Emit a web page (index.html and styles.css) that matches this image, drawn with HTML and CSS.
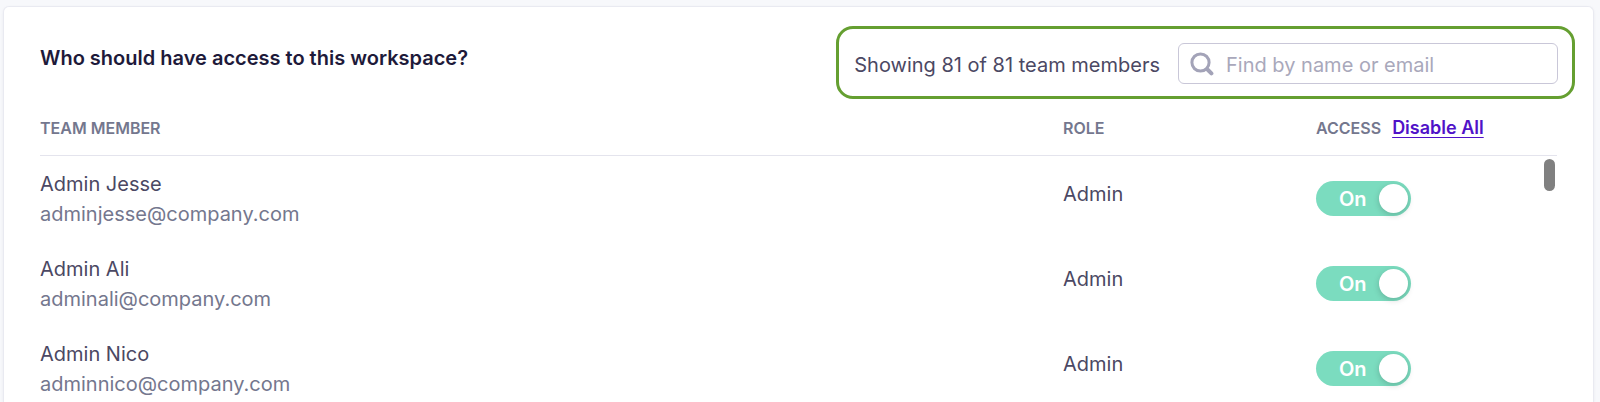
FILE: index.html
```html
<!DOCTYPE html>
<html lang="en">
<head>
<meta charset="utf-8">
<meta name="viewport" content="width=device-width, initial-scale=1">
<title>Workspace access</title>
<link rel="stylesheet" href="styles.css">
</head>
<body>
<main class="card">
  <header class="card-header">
    <h1 class="title">Who should have access to this workspace?</h1>
    <form class="filter" role="search">
      <label class="count" for="member-search">Showing 81 of 81 team members</label>
      <div class="search">
        <svg class="search-icon" viewBox="0 0 24 24" aria-hidden="true">
          <circle cx="10.5" cy="10.5" r="8.6"/>
          <path d="M16.8 16.8 L17.6 17.6"/>
          <path class="search-handle" d="M18 18 L21.4 21.4"/>
        </svg>
        <input class="search-input" id="member-search" type="search" placeholder="Find by name or email">
      </div>
    </form>
  </header>
  <section class="members">
    <div class="members-scroll">
      <table class="table">
        <thead>
          <tr>
            <th class="col-member" scope="col">TEAM MEMBER</th>
            <th class="col-role" scope="col">ROLE</th>
            <th class="col-access" scope="col">ACCESS <a class="disable-all" href="#">Disable All</a></th>
          </tr>
        </thead>
        <tbody>
          <tr>
            <td><div class="name">Admin Jesse</div><div class="email">adminjesse@company.com</div></td>
            <td class="role">Admin</td>
            <td class="access"><label class="toggle"><input class="toggle-input" type="checkbox" checked><span class="toggle-text">On</span></label></td>
          </tr>
          <tr>
            <td><div class="name">Admin Ali</div><div class="email">adminali@company.com</div></td>
            <td class="role">Admin</td>
            <td class="access"><label class="toggle"><input class="toggle-input" type="checkbox" checked><span class="toggle-text">On</span></label></td>
          </tr>
          <tr>
            <td><div class="name">Admin Nico</div><div class="email">adminnico@company.com</div></td>
            <td class="role">Admin</td>
            <td class="access"><label class="toggle"><input class="toggle-input" type="checkbox" checked><span class="toggle-text">On</span></label></td>
          </tr>
        </tbody>
      </table>
    </div>
    <span class="scroll-thumb" aria-hidden="true"></span>
  </section>
</main>
</body>
</html>
```
FILE: styles.css
```css
* {
  box-sizing: border-box;
}

body {
  margin: 0;
  padding: 6px 6px 0 3px;
  height: 100vh;
  display: flex;
  overflow: hidden;
  background: #f7f8fb;
  color: #4b4863;
  font: 400 20px/30px Inter, "Liberation Sans", sans-serif;
}

.card {
  flex: 1;
  min-width: 0;
  display: flex;
  flex-direction: column;
  padding: 19px 18px 0 36px;
  background: #fff;
  border: 1px solid #e9eaf1;
  border-bottom: 0;
  border-radius: 6px 6px 0 0;
  box-shadow: 0 1px 3px rgba(40, 40, 90, 0.06);
}

.card-header {
  display: flex;
  justify-content: space-between;
  align-items: flex-start;
}

.title {
  margin: 17px 0 0;
  color: #1e1a3a;
  font-size: 20px;
  line-height: 30px;
  font-weight: 600;
}

.filter {
  display: flex;
  align-items: center;
  gap: 18px;
  padding: 14px 14px 12px 15px;
  border: 3px solid #659f31;
  border-radius: 17px;
}

.count {
  padding-top: 2px;
}

.search {
  display: flex;
  align-items: center;
  gap: 12px;
  width: 380px;
  height: 41px;
  padding: 0 11px;
  border: 1px solid #c9c7d8;
  border-radius: 6px;
}

.search-icon {
  flex: none;
  width: 24px;
  height: 24px;
  fill: none;
  stroke: #a3a3b8;
  stroke-width: 3;
  stroke-linecap: round;
}

.search-handle {
  stroke-width: 4;
}

.search-input {
  flex: 1;
  min-width: 0;
  padding: 2px 0 0;
  border: 0;
  outline: 0;
  background: none;
  color: inherit;
  font: inherit;
}

.search-input::placeholder {
  color: #a9a8bb;
  opacity: 1;
}

.members {
  position: relative;
  flex: 1;
  min-height: 0;
  margin-right: 18px;
}

.members-scroll {
  height: 100%;
  overflow-y: auto;
  scrollbar-width: none;
}

.table {
  width: 100%;
  table-layout: fixed;
  border-spacing: 0;
}

th {
  position: sticky;
  top: 0;
  z-index: 1;
  padding: 14px 0 12px;
  border-bottom: 1px solid #e4e4ed;
  background: #fff;
  color: #74778e;
  font-size: 16px;
  font-weight: 600;
  text-align: left;
}

.col-role {
  width: 253px;
}

.col-access {
  width: 241px;
}

.disable-all {
  margin-left: 7px;
  color: #5012c8;
  font-size: 18px;
  font-weight: 600;
  text-underline-offset: 3px;
}

td {
  padding: 13px 0 12px;
  vertical-align: top;
}

.email {
  color: #74778e;
}

.role {
  padding-top: 23px;
}

.access {
  padding-top: 25px;
}

.toggle {
  position: relative;
  display: flex;
  width: 95px;
  height: 35px;
}

.toggle-input {
  appearance: none;
  display: flex;
  justify-content: flex-start;
  align-items: center;
  width: 100%;
  height: 100%;
  margin: 0;
  padding: 0 3px;
  border-radius: 18px;
  background: #c9c7d8;
}

.toggle-input:checked {
  justify-content: flex-end;
  background: #7bdcbf;
}

.toggle-input::before {
  content: "";
  width: 29px;
  height: 29px;
  border-radius: 50%;
  background: #fff;
  box-shadow: 0 2px 6px rgba(0, 0, 0, 0.18);
}

.toggle-text {
  position: absolute;
  top: 3px;
  left: 23px;
  color: #fff;
  font-weight: 600;
  pointer-events: none;
}

.scroll-thumb {
  position: absolute;
  top: 60px;
  right: 2px;
  z-index: 2;
  width: 11px;
  height: 32px;
  border-radius: 6px;
  background: #808080;
}
```
